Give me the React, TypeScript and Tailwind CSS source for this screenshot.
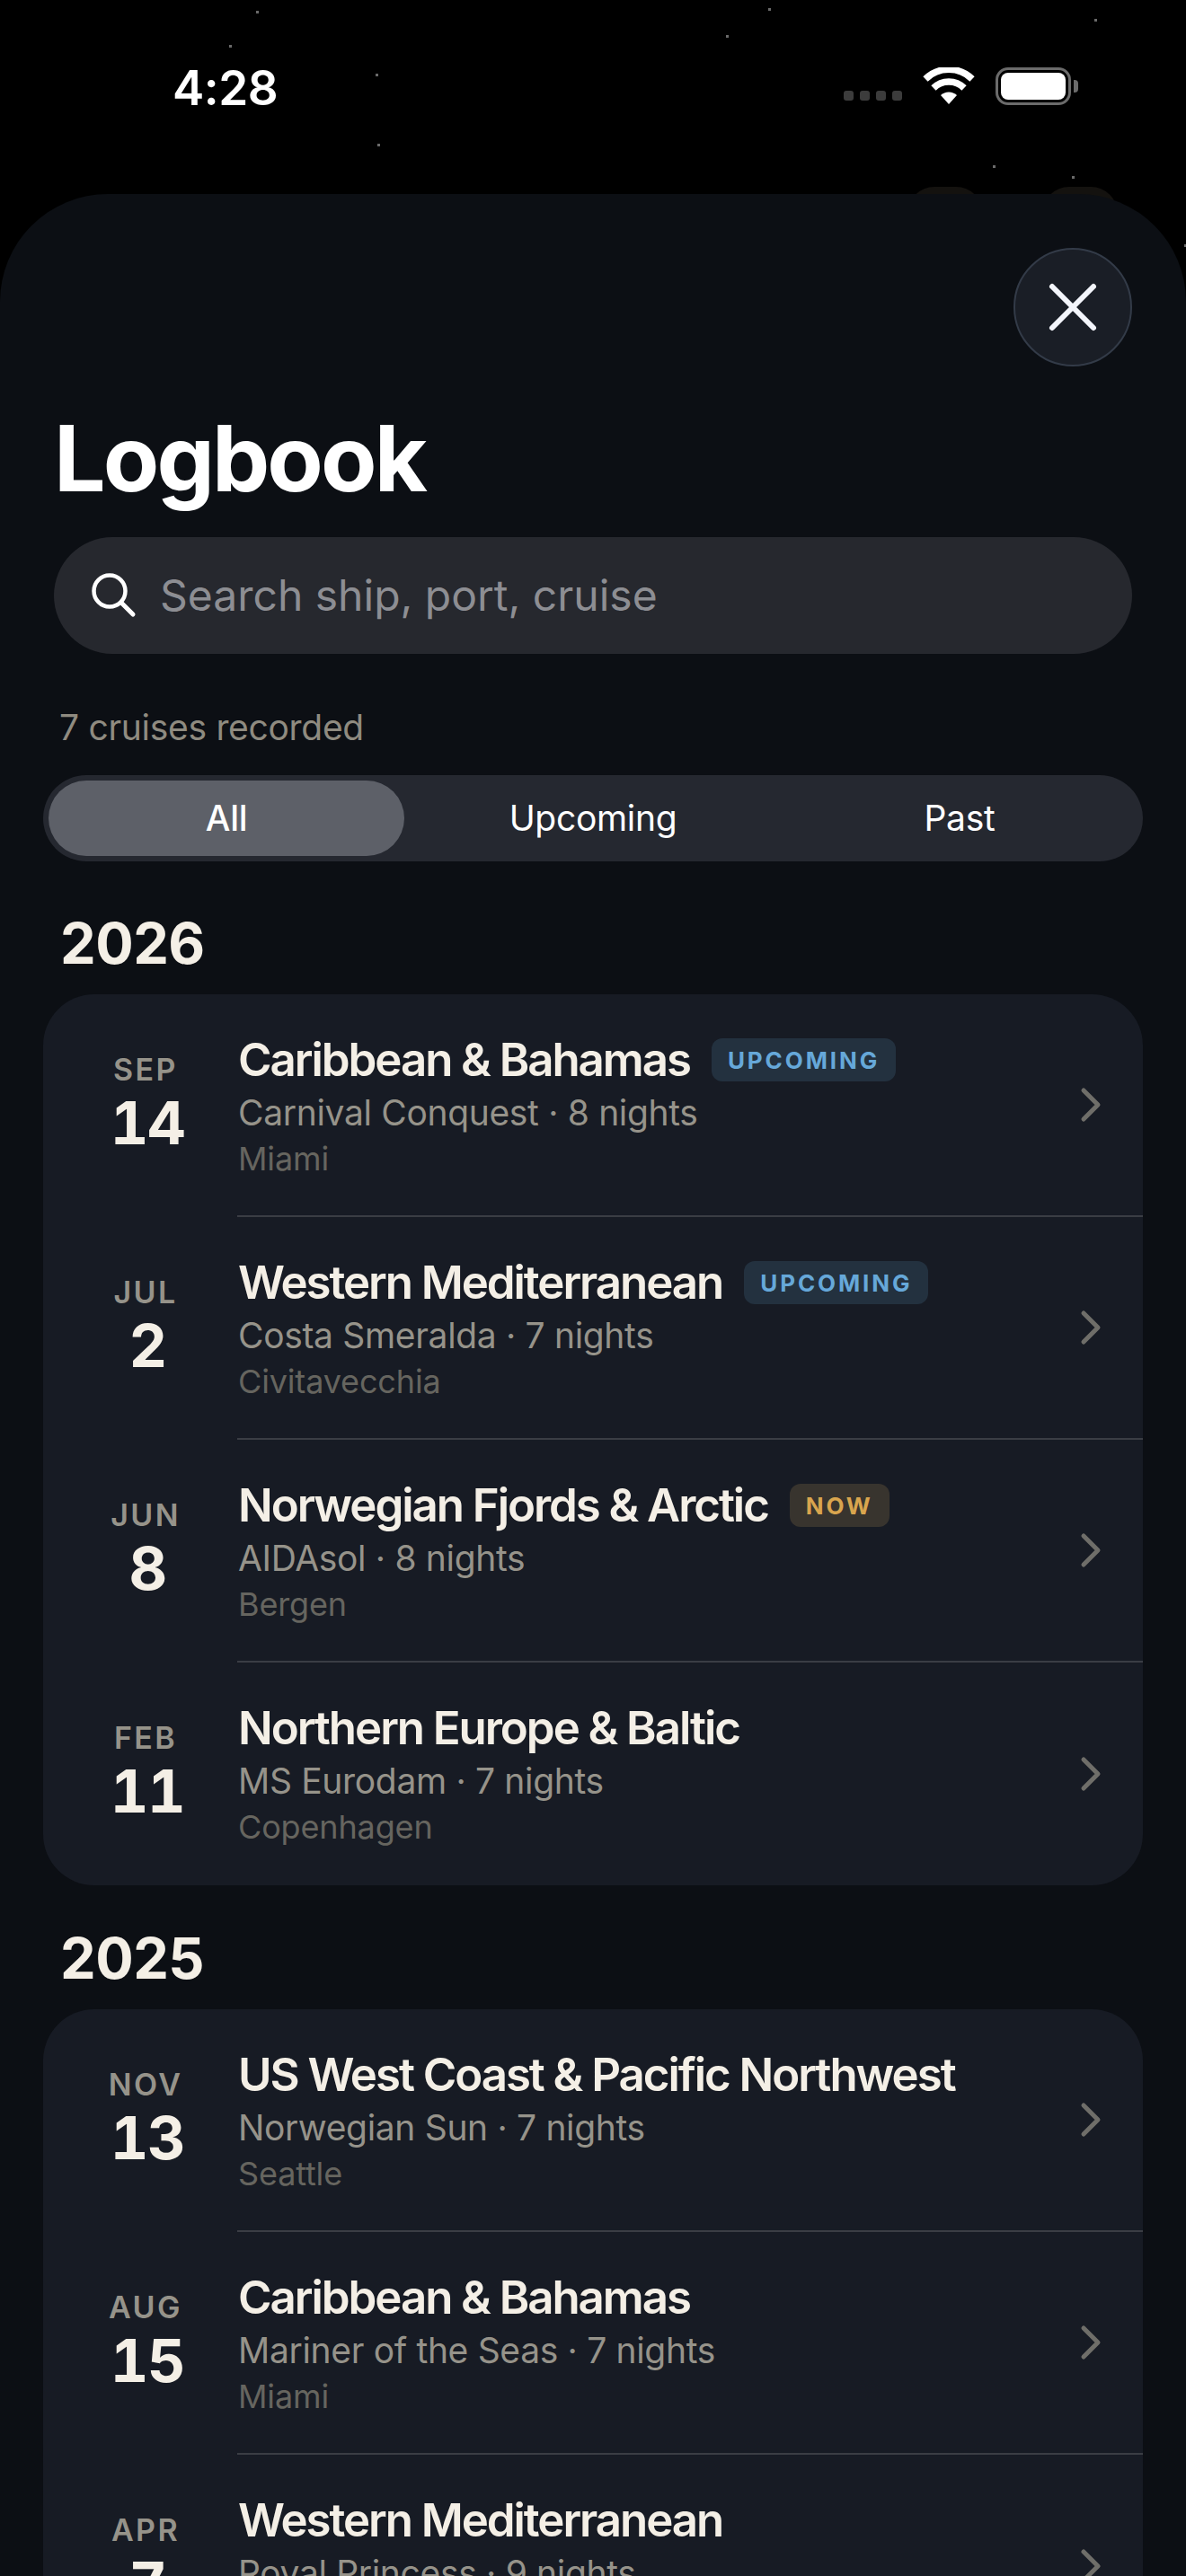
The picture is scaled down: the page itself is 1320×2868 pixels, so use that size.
// App.tsx
// Logbook sheet: iPhone status bar over a starfield, then the list of cruises by year.

const stars = [
  { x: 285, y: 12 }, { x: 855, y: 9 }, { x: 1218, y: 21 }, { x: 255, y: 50 }, { x: 808, y: 39 },
  { x: 418, y: 82 }, { x: 420, y: 160 }, { x: 1105, y: 184 }, { x: 1193, y: 196 }, { x: 1318, y: 272 },
]

type Cruise = {
  month: string
  day: string
  title: string
  ship: string
  port: string
  badge?: "UPCOMING" | "NOW"
}

const y2026: Cruise[] = [
  { month: "SEP", day: "14", title: "Caribbean & Bahamas", ship: "Carnival Conquest · 8 nights", port: "Miami", badge: "UPCOMING" },
  { month: "JUL", day: "2", title: "Western Mediterranean", ship: "Costa Smeralda · 7 nights", port: "Civitavecchia", badge: "UPCOMING" },
  { month: "JUN", day: "8", title: "Norwegian Fjords & Arctic", ship: "AIDAsol · 8 nights", port: "Bergen", badge: "NOW" },
  { month: "FEB", day: "11", title: "Northern Europe & Baltic", ship: "MS Eurodam · 7 nights", port: "Copenhagen" },
]

const y2025: Cruise[] = [
  { month: "NOV", day: "13", title: "US West Coast & Pacific Northwest", ship: "Norwegian Sun · 7 nights", port: "Seattle" },
  { month: "AUG", day: "15", title: "Caribbean & Bahamas", ship: "Mariner of the Seas · 7 nights", port: "Miami" },
  { month: "APR", day: "7", title: "Western Mediterranean", ship: "Royal Princess · 9 nights", port: "Barcelona" },
]

function StatusBar() {
  return (
    <div className="flex h-[216px] items-start justify-between pl-[192px] pr-[120px] pt-[66px]">
      <span className="text-[53px] font-semibold leading-[64px] tracking-[-0.5px] text-white">4:28</span>
      <div className="flex items-center pt-[9px]">
        <div className="mt-[20px] flex gap-[7px]">
          <span className="h-[11px] w-[11px] rounded-[3px] bg-[#3c3c3c]" />
          <span className="h-[11px] w-[11px] rounded-[3px] bg-[#3c3c3c]" />
          <span className="h-[11px] w-[11px] rounded-[3px] bg-[#3c3c3c]" />
          <span className="h-[11px] w-[11px] rounded-[3px] bg-[#3c3c3c]" />
        </div>
        <svg className="ml-[23px]" width="58" height="42" viewBox="0 0 58 42" fill="none">
          <path d="M29 41 L20 31 A13 13 0 0 1 38 31 Z" fill="#fff" />
          <path d="M12 23 A24 24 0 0 1 46 23" stroke="#fff" strokeWidth="7.5" />
          <path d="M3 13 A37 37 0 0 1 55 13" stroke="#fff" strokeWidth="7.5" />
        </svg>
        <div className="ml-[23px] flex items-center">
          <div className="h-[42px] w-[84px] rounded-[14px] border-[3px] border-[#6b6b6b] p-[3px]">
            <div className="h-full w-full rounded-[8px] bg-white" />
          </div>
          <div className="ml-[3px] h-[14px] w-[5px] rounded-r-[4px] bg-[#6b6b6b]" />
        </div>
      </div>
    </div>
  )
}

function Badge({ kind }: { kind: "UPCOMING" | "NOW" }) {
  const now = kind === "NOW"
  return (
    <span
      className={`ml-[24px] flex h-[48px] shrink-0 items-center rounded-[12px] px-[18px] text-[26px] font-bold tracking-[2.9px] ${
        now ? "bg-[#38342e] text-[#d9a54e]" : "bg-[#23313f] text-[#66a8d9]"
      }`}
    >
      {kind}
    </span>
  )
}

function Row({ c, last }: { c: Cruise; last: boolean }) {
  return (
    <div className="flex h-[248px]">
      <div className="w-[216px] shrink-0 pl-[12px] pt-[64px] text-center">
        <div className="text-[34px] font-semibold leading-[40px] tracking-[2.4px] text-[#96938a]">{c.month}</div>
        <div className="ml-[4px] mt-[3px] text-[66px] font-bold tabular-nums leading-[72px] tracking-[-1.5px] text-[#f4efe6]">{c.day}</div>
      </div>
      <div className={`flex min-w-0 flex-1 items-center ${last ? "" : "border-b-2 border-[#3a3d44]"}`}>
        <div className="min-w-0 flex-1 self-start pl-[1px] pt-[44px]">
          <div className="flex h-[58px] items-center">
            <span className="whitespace-nowrap text-[51px] font-semibold leading-[58px] tracking-[-2.05px] text-[#f4efe6]">
              {c.title}
            </span>
            {c.badge && <Badge kind={c.badge} />}
          </div>
          <div className="mt-[5px] text-[39px] leading-[50px] tracking-[-0.33px] text-[#96938a]">{c.ship}</div>
          <div className="mt-[1px] text-[36px] leading-[50px] tracking-[-0.15px] text-[#66655f]">{c.port}</div>
        </div>
        <svg className="mr-[46px]" width="24" height="40" viewBox="0 0 24 40" fill="none">
          <path d="M4 4 L20 20 L4 36" stroke="#6f6e69" strokeWidth="5" strokeLinecap="round" strokeLinejoin="round" />
        </svg>
      </div>
    </div>
  )
}

function YearGroup({ year, items, topClass }: { year: string; items: Cruise[]; topClass: string }) {
  return (
    <div className={topClass}>
      <div className="pl-[19px] text-[63px] font-bold leading-[76px] tracking-[-0.5px] text-[#f4efe6]">{year}</div>
      <div className="mt-[19px] overflow-hidden rounded-[57px] bg-[#171b24]">
        {items.map((c, i) => (
          <Row key={c.month + c.day} c={c} last={i === items.length - 1} />
        ))}
      </div>
    </div>
  )
}

export default function App() {
  return (
    <div className="relative h-[2868px] w-[1320px] overflow-hidden bg-black font-['Inter',sans-serif]">
      {stars.map((s) => (
        <span
          key={s.x + "-" + s.y}
          className="absolute h-[3px] w-[3px] bg-[#6a6a6a]"
          style={{ left: s.x, top: s.y }}
        />
      ))}
      <div className="absolute left-[1010px] top-[208px] h-[60px] w-[84px] rounded-full bg-[#14120f]" />
      <div className="absolute left-[1160px] top-[208px] h-[60px] w-[84px] rounded-full bg-[#14120f]" />

      <div className="relative">
        <StatusBar />
        <div className="h-[2652px] rounded-t-[120px] bg-[#0c0f14] px-[48px] pt-[60px]">
          <div className="flex justify-end pr-[12px]">
            <button className="flex h-[132px] w-[132px] items-center justify-center rounded-full border-2 border-[#333b48] bg-[#1a1e26]">
              <svg width="56" height="56" viewBox="0 0 56 56" fill="none">
                <path d="M5 5 L51 51 M51 5 L5 51" stroke="#f3f5fb" strokeWidth="6" strokeLinecap="round" />
              </svg>
            </button>
          </div>

          <h1 className="mt-[44px] pl-[12px] text-[102px] font-bold leading-[116px] tracking-[-2.9px] text-white">Logbook</h1>

          <div className="mx-[12px] mt-[30px] flex h-[130px] items-center rounded-[65px] bg-[#26282e] pl-[42px]">
            <svg width="50" height="50" viewBox="0 0 50 50" fill="none">
              <circle cx="20" cy="20" r="17.5" stroke="#fff" strokeWidth="4.5" />
              <path d="M33 33 L46 46" stroke="#fff" strokeWidth="5" strokeLinecap="round" />
            </svg>
            <span className="ml-[26px] text-[48px] text-[#8d8e93]">Search ship, port, cruise</span>
          </div>

          <div className="mt-[58px] pl-[18px] text-[39px] leading-[48px] tracking-[-0.3px] text-[#8f8b80]">7 cruises recorded</div>

          <div className="mt-[29px] grid h-[96px] grid-cols-3 gap-[12px] rounded-[48px] bg-[#252830] p-[6px] text-[39px] tracking-[-0.3px] text-white">
            <div className="flex items-center justify-center rounded-[42px] bg-[#5d6068] font-medium">All</div>
            <div className="flex items-center justify-center">Upcoming</div>
            <div className="flex items-center justify-center">Past</div>
          </div>

          <YearGroup year="2026" items={y2026} topClass="mt-[53px]" />
          <YearGroup year="2025" items={y2025} topClass="mt-[43px]" />
        </div>
      </div>
    </div>
  )
}
